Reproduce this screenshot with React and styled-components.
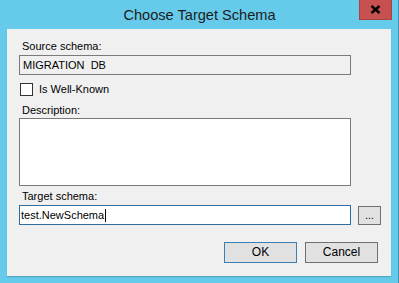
import React from 'react';
import styled, { createGlobalStyle } from 'styled-components';

const Global = createGlobalStyle`
  html, body { margin: 0; padding: 0; background: #66cbea; }
  body { font-family: "Liberation Sans", Arial, sans-serif; }
`;

const Window = styled.div`
  width: 399px;
  height: 283px;
  box-sizing: border-box;
  background: #66cbea;
  border-right: 1px solid #3f8fb0;
  display: flex;
  flex-direction: column;
`;

const TitleBar = styled.div`
  height: 29px;
  display: grid;
  grid-template-columns: 40px 1fr 39px;
  align-items: start;
`;

const Title = styled.div`
  grid-column: 2;
  text-align: center;
  font-size: 14.6px;
  line-height: 30px;
  color: #1c1c1c;
`;

const CloseBtn = styled.div`
  width: 33px;
  height: 20px;
  box-sizing: border-box;
  background: #c75050;
  border: 1px solid #a94242;
  border-top: none;
  display: flex;
  align-items: center;
  justify-content: center;
`;

const Client = styled.div`
  margin: 0 7px 7px 7px;
  height: 247px;
  box-sizing: border-box;
  background: #f0f0f0;
  box-shadow: 0 1px 1px rgba(0, 0, 0, 0.18);
  padding: 11px 10px 0 12px;
  display: flex;
  flex-direction: column;
  font-size: 11px;
  line-height: 13px;
  color: #000;
`;

const Label = styled.div`
  padding-left: 3px;
  margin-top: ${p => p.$top || 0}px;
  height: 13px;
`;

const Field = styled.div`
  width: 332px;
  flex-shrink: 0;
  height: ${p => p.$h || 20}px;
  box-sizing: border-box;
  margin-top: ${p => p.$top ?? 2}px;
  border: 1px solid ${p => (p.$focus ? '#2f6ea3' : '#7a7a7a')};
  background: ${p => (p.$readOnly ? '#f0f0f0' : '#fff')};
  padding: 2px ${p => (p.$focus ? '1px' : '3px')};
  display: flex;
  align-items: center;
`;

const CheckRow = styled.label`
  margin-top: 8px;
  margin-left: 1px;
  display: flex;
  align-items: center;
  gap: 6px;
  height: 13px;
`;

const Box = styled.span`
  width: 13px;
  height: 13px;
  box-sizing: border-box;
  border: 1px solid #333;
  background: #fff;
`;

const InputRow = styled.div`
  display: flex;
  align-items: center;
  gap: 7px;
  margin-top: 2px;
`;

const Caret = styled.span`
  display: inline-block;
  width: 1px;
  height: 13px;
  background: #000;
  margin-left: 1px;
`;

const Button = styled.div`
  width: ${p => p.$w || 73}px;
  height: ${p => p.$h || 21}px;
  flex-shrink: 0;
  box-sizing: border-box;
  border: 1px solid ${p => (p.$default ? '#3c7fb1' : '#707070')};
  background: #e1e1e1;
  display: flex;
  align-items: center;
  justify-content: center;
  font-size: ${p => p.$fs || 12}px;
`;

const ButtonRow = styled.div`
  margin-top: 17px;
  padding-right: 3px;
  display: flex;
  justify-content: flex-end;
  gap: 8px;
`;

export default function App() {
  return (
    <>
      <Global />
      <Window>
        <TitleBar>
          <Title>Choose Target Schema</Title>
          <CloseBtn>
            <svg width="11" height="9" viewBox="0 0 11 9">
              <path d="M1.5 1 L9.5 8 M9.5 1 L1.5 8" stroke="#000" strokeWidth="2.4" />
            </svg>
          </CloseBtn>
        </TitleBar>
        <Client>
          <Label>Source schema:</Label>
          <Field $readOnly>MIGRATION&nbsp;&nbsp;DB</Field>
          <CheckRow>
            <Box />
            Is Well-Known
          </CheckRow>
          <Label $top={8}>Description:</Label>
          <Field $h={68} $top={1} />
          <Label $top={4}>Target schema:</Label>
          <InputRow>
            <Field $focus $top={0}>
              test.NewSchema<Caret />
            </Field>
            <Button $w={23} $h={19} $fs={11}>...</Button>
          </InputRow>
          <ButtonRow>
            <Button $default>OK</Button>
            <Button>Cancel</Button>
          </ButtonRow>
        </Client>
      </Window>
    </>
  );
}
